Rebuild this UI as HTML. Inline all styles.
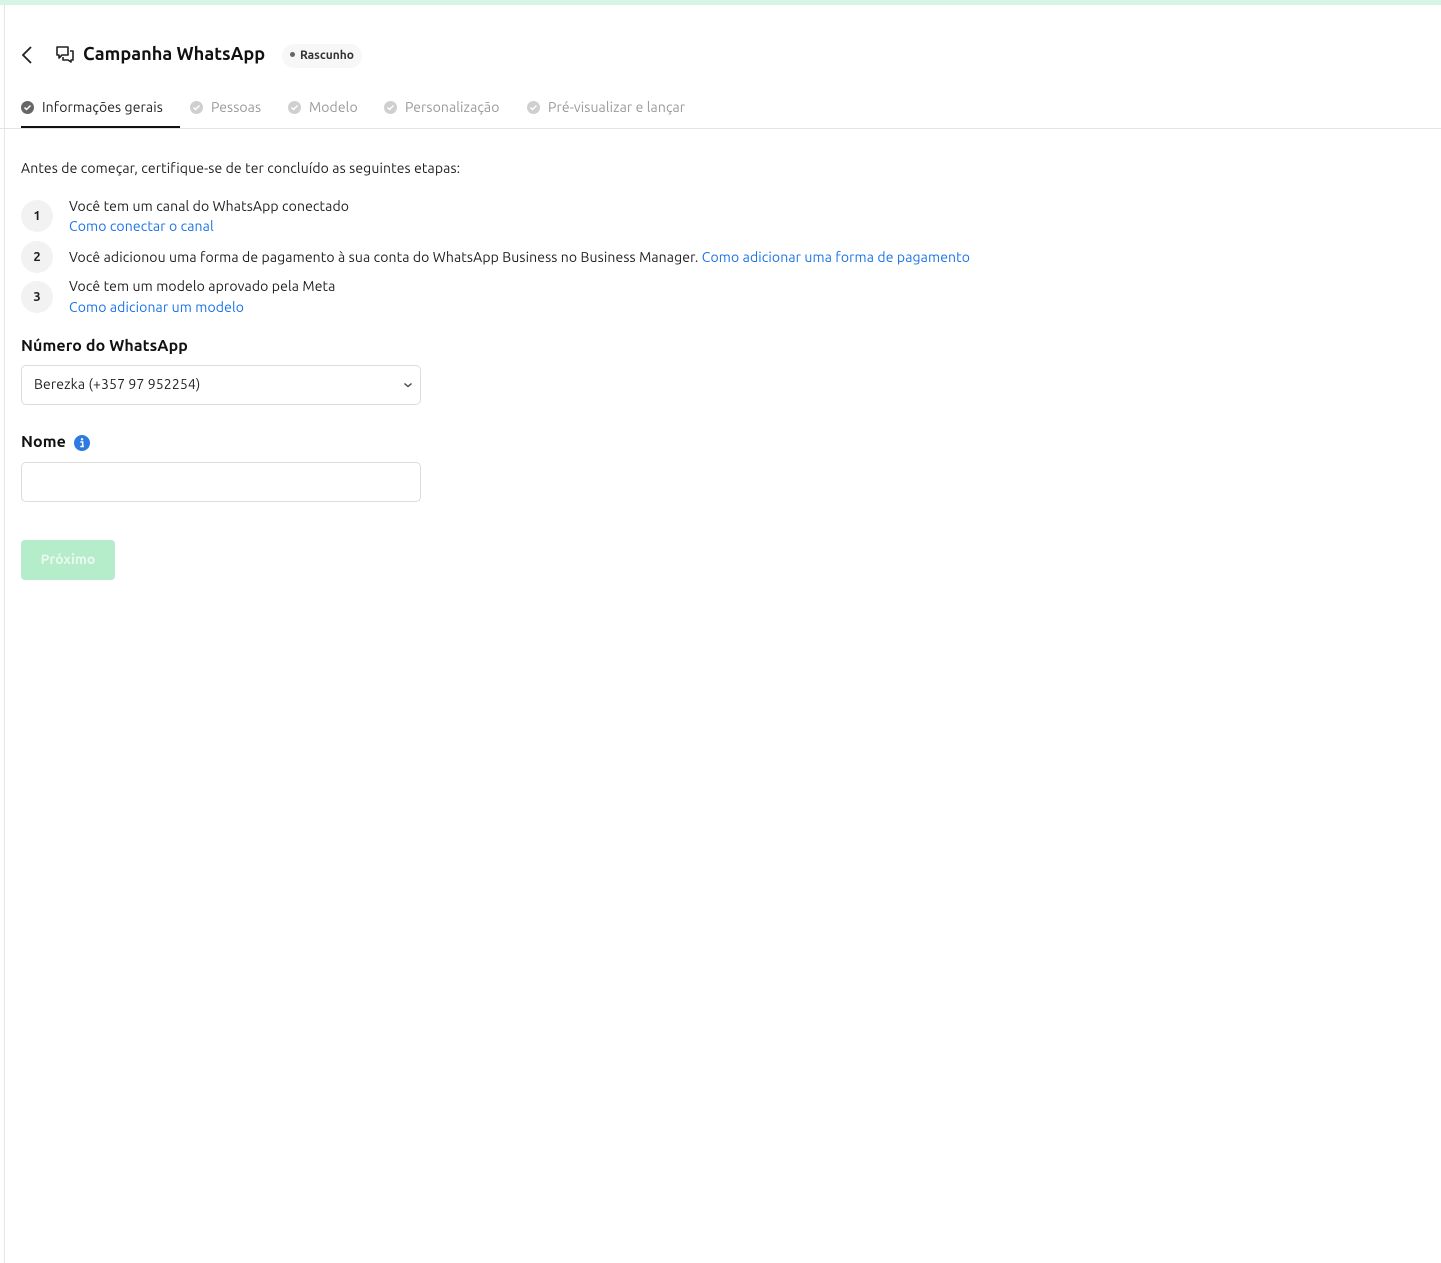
<!DOCTYPE html>
<html><head><meta charset="utf-8"><style>
*{box-sizing:border-box;margin:0;padding:0}
html,body{width:1441px;height:1263px;background:#fff;font-family:"Ubuntu","Liberation Sans",sans-serif;color:#1f1f1f;overflow:hidden;position:relative}
.topbar{position:absolute;left:0;top:0;width:1441px;height:5px;background:#d6f5e6}
.lborder{position:absolute;left:4px;top:5px;width:1px;height:1258px;background:#e6e6e6}
.abs{position:absolute;white-space:nowrap}
.title{left:83px;top:44px;font-size:18.2px;font-weight:bold;color:#111}
.badge{left:282px;top:44px;height:24px;padding:0 8px;border-radius:12px;background:#f7f7f8;font-size:12px;font-weight:bold;line-height:24px;color:#333}
.badge:before{content:"";display:inline-block;width:5px;height:5px;border-radius:50%;background:#666;margin-right:5px;vertical-align:2px}
.tab{top:99px;font-size:14px;color:#9a9a9a;display:flex;align-items:center;gap:8px;letter-spacing:0.1px}
.tab .ck{width:13px;height:13px;border-radius:50%;background:#cfcfcf;display:flex;align-items:center;justify-content:center}
.tab.act{color:#222}
.tab.act .ck{background:#666}
.tabline{left:0;top:128px;width:1441px;height:1px;background:#e3e3e3}
.tabact{left:21px;top:126px;width:159px;height:2px;background:#111}
.t14{font-size:14px;letter-spacing:0.12px}
.num{width:32px;height:32px;border-radius:50%;background:#f2f2f2;font-size:13px;font-weight:bold;text-align:center;line-height:32px}
a{color:#1a73e8;text-decoration:none}
.lbl{font-size:16px;font-weight:bold;color:#111;letter-spacing:0.1px}
.box{left:21px;width:400px;height:40px;border:1px solid #dcdcdc;border-radius:5px}
.btn{left:21px;top:540px;width:94px;height:40px;border-radius:4px;background:#b5ecc9;color:#e9f9ef;font-size:14px;font-weight:bold;text-align:center;line-height:38px}
</style></head><body>
<div class="topbar"></div><div class="lborder"></div>
<svg class="abs" style="left:20px;top:45px" width="14" height="20" viewBox="0 0 14 20"><path d="M11 2 L3 10 L11 18" fill="none" stroke="#222" stroke-width="1.8"/></svg>
<svg class="abs" style="left:55px;top:45px" width="20" height="18" viewBox="0 0 20 18"><path d="M2 2h11v8H7l-3 3v-3H2z" fill="none" stroke="#222" stroke-width="1.6" stroke-linejoin="round"/><path d="M8 12v3h5l3 2v-2h2V6h-3" fill="none" stroke="#222" stroke-width="1.6" stroke-linejoin="round"/></svg>
<div class="abs title">Campanha WhatsApp</div>
<div class="abs badge">Rascunho</div>
<div class="abs tab act" style="left:21px"><span class="ck"><svg width="9" height="9" viewBox="0 0 9 9"><path d="M1.5 4.5l2 2 4-4" fill="none" stroke="#fff" stroke-width="1.5"/></svg></span>Informações gerais</div>
<div class="abs tab" style="left:190px"><span class="ck"><svg width="9" height="9" viewBox="0 0 9 9"><path d="M1.5 4.5l2 2 4-4" fill="none" stroke="#fff" stroke-width="1.5"/></svg></span>Pessoas</div>
<div class="abs tab" style="left:288px"><span class="ck"><svg width="9" height="9" viewBox="0 0 9 9"><path d="M1.5 4.5l2 2 4-4" fill="none" stroke="#fff" stroke-width="1.5"/></svg></span>Modelo</div>
<div class="abs tab" style="left:384px"><span class="ck"><svg width="9" height="9" viewBox="0 0 9 9"><path d="M1.5 4.5l2 2 4-4" fill="none" stroke="#fff" stroke-width="1.5"/></svg></span>Personalização</div>
<div class="abs tab" style="left:527px"><span class="ck"><svg width="9" height="9" viewBox="0 0 9 9"><path d="M1.5 4.5l2 2 4-4" fill="none" stroke="#fff" stroke-width="1.5"/></svg></span>Pré-visualizar e lançar</div>
<div class="abs tabline"></div><div class="abs tabact"></div>
<div class="abs t14" style="left:21px;top:160px">Antes de começar, certifique-se de ter concluído as seguintes etapas:</div>
<div class="abs num" style="left:21px;top:200px">1</div>
<div class="abs t14" style="left:69px;top:198px">Você tem um canal do WhatsApp conectado</div>
<div class="abs t14" style="left:69px;top:218px"><a>Como conectar o canal</a></div>
<div class="abs num" style="left:21px;top:241px">2</div>
<div class="abs t14" style="left:69px;top:249px">Você adicionou uma forma de pagamento à sua conta do WhatsApp Business no Business Manager. <a>Como adicionar uma forma de pagamento</a></div>
<div class="abs num" style="left:21px;top:281px">3</div>
<div class="abs t14" style="left:69px;top:278px">Você tem um modelo aprovado pela Meta</div>
<div class="abs t14" style="left:69px;top:299px"><a>Como adicionar um modelo</a></div>
<div class="abs lbl" style="left:21px;top:337px">Número do WhatsApp</div>
<div class="abs box" style="top:365px"><span class="abs t14" style="left:12px;top:10px">Berezka (+357 97 952254)</span><svg class="abs" style="left:381px;top:15px" width="10" height="8" viewBox="0 0 10 8"><path d="M1.5 2.5l3.5 3 3.5-3" fill="none" stroke="#444" stroke-width="1.4"/></svg></div>
<div class="abs lbl" style="left:21px;top:433px">Nome</div>
<svg class="abs" style="left:74px;top:435px" width="16" height="16" viewBox="0 0 16 16"><circle cx="8" cy="8" r="8" fill="#2d7be0"/><circle cx="8" cy="4.3" r="1.2" fill="#fff"/><path d="M6.3 7h2.4v4.5h1.2M6.3 11.5h3.6" stroke="#fff" stroke-width="1.5" fill="none"/></svg>
<div class="abs box" style="top:462px"></div>
<div class="abs btn">Próximo</div>
</body></html>
